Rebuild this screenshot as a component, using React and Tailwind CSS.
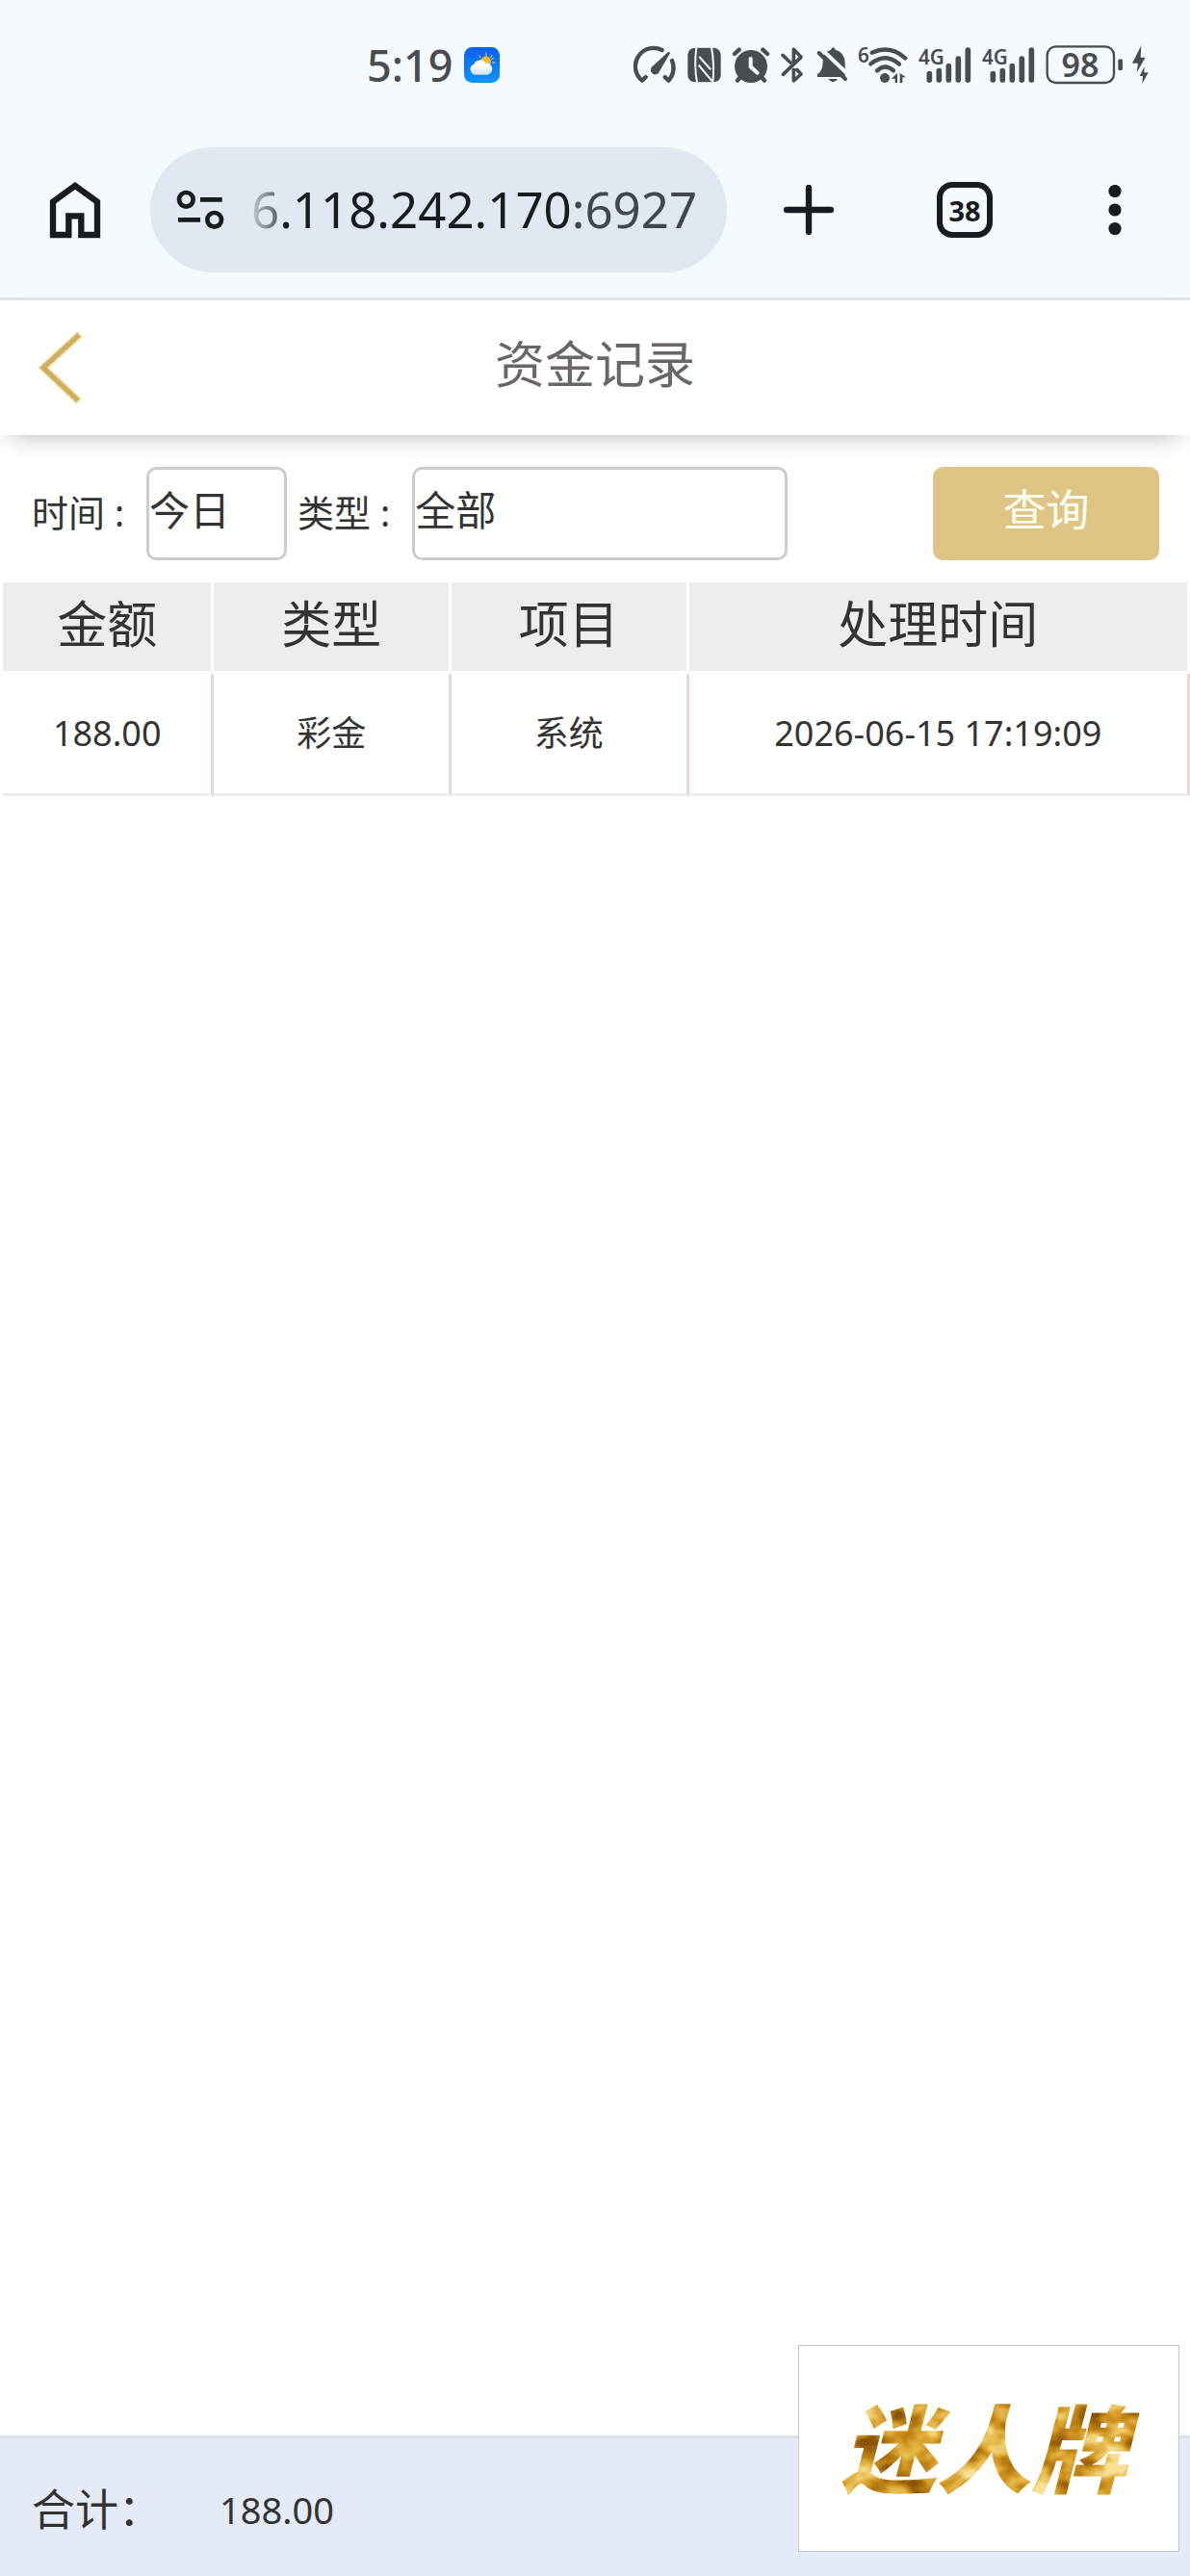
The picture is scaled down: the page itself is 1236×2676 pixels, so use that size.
import React from 'react';

const records = [
  { amount: '188.00', type: '彩金', item: '系统', time: '2026-06-15 17:19:09' },
];

const INK = '#494c50';
const BAR = '#f5faff';

function WeatherIcon() {
  return (
    <svg viewBox="0 0 111 111" className="w-[37px] h-[37px] shrink-0">
      <defs>
        <linearGradient id="sky" x1="0" y1="0" x2="0" y2="1">
          <stop offset="0" stopColor="#0b5fe9" />
          <stop offset="1" stopColor="#0797fd" />
        </linearGradient>
        <linearGradient id="cloud" x1="0" y1="0" x2="0" y2="1">
          <stop offset="0.4" stopColor="#ffffff" />
          <stop offset="1" stopColor="#cfe2f8" />
        </linearGradient>
      </defs>
      <rect width="111" height="111" rx="25" fill="url(#sky)" />
      <path d="M48 27l3 6M69 18v7M87 25l-4 7M88 48h8M86 37l6-3" stroke="#f7d98a" strokeWidth="3" strokeLinecap="round" />
      <circle cx="68" cy="44" r="16" fill="#f6b92d" />
      <path d="M36 86a17 17 0 0 1-5-33a20 20 0 0 1 36-3a18 18 0 0 1 5 36z" fill="url(#cloud)" />
    </svg>
  );
}

function GaugeIcon() {
  return (
    <svg viewBox="51 36 135 120" className="w-[45px] h-10">
      <g fill="none" stroke={INK} strokeWidth="13" strokeLinecap="round" strokeLinejoin="round">
        <path d="M89 135L78 146A57 57 0 0 1 140 51" />
        <path d="M171 84A57 57 0 0 1 160 146L149 135" />
      </g>
      <path d="M158 58q6-3 7 3L132 117A14 14 0 1 1 109 103z" fill={INK} />
    </svg>
  );
}

function NfcIcon() {
  return (
    <svg viewBox="216 36 111 120" className="w-[37px] h-10">
      <rect x="220" y="44" width="103" height="107" rx="22" fill={INK} />
      <g fill="none" stroke={BAR} strokeWidth="6">
        <path d="M247 42Q239 98 249 152" />
        <path d="M294 42Q304 98 298 152" />
        <path d="M256 72L292 112" />
        <path d="M254 98L296 148" />
      </g>
    </svg>
  );
}

function AlarmIcon() {
  return (
    <svg viewBox="360 36 120 120" className="w-10 h-10">
      <circle cx="420" cy="102" r="51" fill={INK} />
      <path d="M369 63L383 50M457 50L471 63M386 136L378 146M454 136L462 146" stroke={INK} strokeWidth="13" strokeLinecap="round" />
      <path d="M419 78V103L440 122" fill="none" stroke={BAR} strokeWidth="12" strokeLinecap="round" />
    </svg>
  );
}

function BluetoothIcon() {
  return (
    <svg viewBox="513 36 75 120" className="w-[25px] h-10">
      <g fill="none" stroke={INK} strokeWidth="11" strokeLinecap="round" strokeLinejoin="round">
        <path d="M522 67L546 90" />
        <path d="M523 127L579 73L556 49V92" />
        <path d="M556 112V147L579 126L566 112" />
      </g>
    </svg>
  );
}

function MutedBellIcon() {
  return (
    <svg viewBox="615 36 108 120" className="w-9 h-10">
      <path d="M627 135v-9q17-8 17-40q2-30 25-36q7-14 14 0q29 7 30 42v43z" fill={INK} />
      <path d="M640 48L728 132V150" fill="none" stroke={BAR} strokeWidth="12" />
      <path d="M632 60L714 141" stroke={INK} strokeWidth="12" strokeLinecap="round" />
      <path d="M661 141h29q-14 20-29 0z" fill={INK} />
    </svg>
  );
}

function WifiIcon() {
  return (
    <svg viewBox="-27 21 159 150" className="w-[53px] h-[50px]">
      <text x="-27" y="89" fontSize="62" fontWeight="600" fill={INK}>6</text>
      <g fill="none" stroke={INK} strokeWidth="13" strokeLinecap="round">
        <path d="M17 59Q72 34 121 76" />
        <path d="M13 94Q60 57 102 95" />
        <path d="M33 115Q59 92 84 115" />
      </g>
      <circle cx="57" cy="138" r="15" fill={INK} />
      <path d="M77 140L96 123V153H89V140zM104 123L123 136H112V153H104z" fill={INK} />
    </svg>
  );
}

function SignalIcon() {
  return (
    <svg viewBox="159 21 168 150" className="w-14 h-[50px]">
      <text x="159" y="95" fontSize="62" fontWeight="600" fill={INK}>4G</text>
      <g stroke={INK} strokeWidth="17" strokeLinecap="round">
        <path d="M193 125V144M223 116V144M253 101V144M283 78V144M313 51V144" />
      </g>
    </svg>
  );
}

function BatteryIcon() {
  return (
    <svg viewBox="561 6 240 180" className="w-20 h-[60px]">
      <rect x="566" y="40" width="208" height="113" rx="27" fill="none" stroke={INK} strokeWidth="7" />
      <rect x="787" y="79" width="14" height="36" rx="6" fill={INK} />
      <text x="669" y="134" fontSize="102" fontWeight="600" textAnchor="middle" fill={INK}>98</text>
    </svg>
  );
}

function BoltIcon() {
  return (
    <svg viewBox="824 36 51 120" className="w-[17px] h-10">
      <path d="M852 37L824 92H842L838 121L865 74H850zM862 102L847 132H857L855 156L874 121H861z" fill={INK} />
    </svg>
  );
}

function StatusBar() {
  return (
    <div className="h-[134px] flex items-center pl-[381px] pr-[43px] text-[#494c50]">
      <span className="text-[45px] leading-none font-medium">5:19</span>
      <div className="ml-3">
        <WeatherIcon />
      </div>
      <div className="ml-auto flex items-center gap-2.5">
        <GaugeIcon />
        <NfcIcon />
        <AlarmIcon />
        <BluetoothIcon />
        <MutedBellIcon />
        <WifiIcon />
        <SignalIcon />
        <SignalIcon />
        <BatteryIcon />
        <BoltIcon />
      </div>
    </div>
  );
}

function Toolbar() {
  return (
    <div className="flex items-center pt-[19px] pb-[26px] border-b-3 border-[#dde3e8] text-[#181c1f]">
      <button aria-label="主页" className="w-[156px] flex justify-center">
        <svg viewBox="153 144 162 180" className="w-[54px] h-[60px]">
          <path d="M165 312V209L234 159L303 209V312H253V253H214V312Z" fill="none" stroke="currentColor" strokeWidth="19" />
        </svg>
      </button>
      <div className="flex-1 h-[130px] rounded-full bg-[#e2e8f1] flex items-center pl-[27px] gap-7">
        <button aria-label="网站信息">
          <svg viewBox="549 171 150 126" className="w-[50px] h-[42px]">
            <g fill="none" stroke="currentColor" strokeWidth="14">
              <circle cx="580" cy="202" r="22" />
              <circle cx="668" cy="265" r="22" />
              <path d="M624 202H692M555 265H624" />
            </g>
          </svg>
        </button>
        <button className="text-[51px] leading-none whitespace-nowrap pb-0.5">
          <span className="bg-linear-to-r from-[#c4cad2] to-[#5a5f64] bg-clip-text text-transparent">6</span>
          .118.242.170
          <span className="text-[#42474e]">:6927</span>
        </button>
      </div>
      <button aria-label="新标签页" className="w-[170px] flex justify-center">
        <svg viewBox="0 0 156 156" className="w-[52px] h-[52px]">
          <path d="M78 9V147M9 78H147" stroke="currentColor" strokeWidth="19" strokeLinecap="round" />
        </svg>
      </button>
      <button aria-label="标签页" className="w-[154px] flex justify-center">
        <span className="w-[58px] h-[58px] border-6 border-[#181c1f] rounded-2xl flex items-center justify-center text-[29px] leading-none font-bold">
          38
        </span>
      </button>
      <button aria-label="更多" className="w-[157px] flex justify-center">
        <svg viewBox="0 0 14 52" className="w-3.5 h-[52px]" fill="currentColor">
          <circle cx="7" cy="6.5" r="6.6" />
          <circle cx="7" cy="26" r="6.6" />
          <circle cx="7" cy="45.5" r="6.6" />
        </svg>
      </button>
    </div>
  );
}

function PageHeader() {
  return (
    <header className="relative h-[140px] flex items-center justify-center bg-white shadow-[0_12px_24px_-12px_rgba(0,0,0,0.3)]">
      <a href="#back" aria-label="返回" className="absolute left-10">
        <svg viewBox="0 0 48 80" className="w-12 h-20">
          <path d="M43 5L5 40L42 75" fill="none" stroke="#f0dfae" strokeWidth="8" />
          <path d="M42 6L5 40L41 74" fill="none" stroke="#cfae5c" strokeWidth="5" />
        </svg>
      </a>
      <h1 className="text-[52px] leading-none text-[#6b6565] pb-2">资金记录</h1>
    </header>
  );
}

function FilterBar() {
  const label = 'text-[38px] leading-none pb-1 mr-[23px] whitespace-pre';
  const select = 'appearance-none h-[97px] p-0 pb-2 border-3 border-[#ccc] rounded-[10px] bg-white text-[42px] leading-none';
  return (
    <form className="flex items-center pt-[33px] pb-[23px] pl-[33px] pr-8" onSubmit={(e) => e.preventDefault()}>
      <label htmlFor="date" className={label}>时间 :</label>
      <select id="date" className={`w-[146px] ${select}`}>
        <option>今日</option>
        <option>昨日</option>
      </select>
      <label htmlFor="type" className={`ml-[11px] ${label}`}>类型 :</label>
      <select id="type" className={`w-[390px] ${select}`}>
        <option>全部</option>
        <option>彩金</option>
      </select>
      <button className="ml-auto w-[235px] h-[97px] pb-2 rounded-[10px] bg-[#dfc585] text-[#fffef2] text-[45px] leading-none">
        查询
      </button>
    </form>
  );
}

function RecordTable() {
  const th = 'h-[95px] bg-[#ededed] bg-clip-padding border-r-3 border-b-3 border-white text-[52px] leading-none font-normal pb-1.5';
  const td = 'h-[127px] border-r-3 border-r-[#ecd6d8] border-b-3 border-b-[#ededed] text-center text-[36px] leading-none';
  return (
    <div className="pl-[3px]">
      <table className="w-full table-fixed border-separate border-spacing-0">
        <thead>
          <tr>
            <th className={`w-[17.8%] ${th}`}>金额</th>
            <th className={`w-[20%] ${th}`}>类型</th>
            <th className={`w-[20%] ${th}`}>项目</th>
            <th className={th}>处理时间</th>
          </tr>
        </thead>
        <tbody>
          {records.map((r) => (
            <tr key={r.time}>
              <td className={td}>{r.amount}</td>
              <td className={td}>{r.type}</td>
              <td className={td}>{r.item}</td>
              <td className={td}>{r.time}</td>
            </tr>
          ))}
        </tbody>
      </table>
    </div>
  );
}

// gold foil lettering, grain comes from a noise filter
function BrandLogo() {
  return (
    <svg viewBox="0 0 340 150" className="w-[340px] h-[150px]">
      <filter id="foil" x="0" y="0" width="100%" height="100%" colorInterpolationFilters="sRGB">
        <feTurbulence type="fractalNoise" baseFrequency="0.025 0.035" numOctaves="3" seed="7" />
        <feColorMatrix values="2.2 0 0 0 -0.62  2.2 0 0 0 -0.62  2.2 0 0 0 -0.62  0 0 0 0 1" />
        <feComponentTransfer>
          <feFuncR type="table" tableValues="0.54 0.7 0.83 0.91 0.97" />
          <feFuncG type="table" tableValues="0.33 0.47 0.6 0.74 0.88" />
          <feFuncB type="table" tableValues="0.03 0.06 0.14 0.32 0.58" />
        </feComponentTransfer>
        <feComposite in2="SourceAlpha" operator="in" />
      </filter>
      <text x="165" y="113" fontSize="99" fontWeight="900" fontStyle="italic" textAnchor="middle" filter="url(#foil)">
        迷人牌
      </text>
    </svg>
  );
}

function TotalBar() {
  return (
    <footer className="relative mt-auto h-[146px] flex items-center pl-[33px] pt-1 bg-[#e4ebf6] border-t-3 border-[#dddee4]">
      <span className="w-[195px] text-[45px] leading-none">合计：</span>
      <span className="text-[38px] leading-none">188.00</span>
      {/* brand badge floats above the bar */}
      <div className="absolute right-[11px] bottom-[25px] w-[396px] h-[215px] flex items-center justify-center bg-white border border-[#c6c6c6]">
        <BrandLogo />
      </div>
    </footer>
  );
}

export default function App() {
  return (
    <div className="min-h-screen flex flex-col bg-white text-[#333] font-['Noto_Sans','Noto_Sans_CJK_SC',sans-serif]">
      <div className="bg-[#f5faff]">
        <StatusBar />
        <Toolbar />
      </div>
      <PageHeader />
      <FilterBar />
      <RecordTable />
      <TotalBar />
    </div>
  );
}
